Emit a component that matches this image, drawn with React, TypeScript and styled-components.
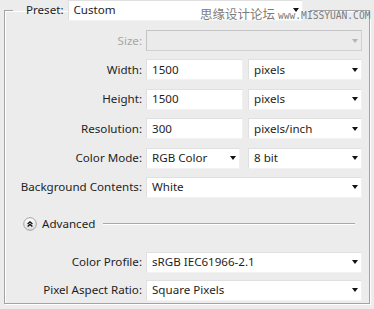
import React from "react";
import styled, { createGlobalStyle } from "styled-components";

const Global = createGlobalStyle`
  html, body { margin: 0; padding: 0; background: #ececec; }
  body { font-family: "Noto Sans", "Liberation Sans", Arial, sans-serif; font-size: 11.6px; color: #1e1e1e; }
`;

const Page = styled.div`
  position: relative;
  width: 374px;
  height: 309px;
  overflow: hidden;
  background: #ececec;
`;

const Group = styled.fieldset`
  margin: -1px 0 0 4px;
  width: 366px;
  box-sizing: border-box;
  height: 305px;
  padding: 9px 7px 0 8px;
  border: 1px solid #a3a3a3;
  box-shadow: 1px 1px 0 #ffffff, inset 1px 1px 0 #ffffff;
  min-width: 0;
`;

const Legend = styled.legend`
  display: flex;
  align-items: center;
  gap: 4px;
  padding: 0 7px 0 13px;
  height: 22px;
`;

const Label = styled.span<{ $disabled?: boolean }>`
  color: ${(p) => (p.$disabled ? "#a6a6a6" : "#1e1e1e")};
  white-space: nowrap;
  text-align: right;
  line-height: 14px;
`;

const Rows = styled.div<{ $gap?: number }>`
  display: grid;
  grid-template-columns: 129px 216px;
  column-gap: 4px;
  row-gap: ${(p) => p.$gap ?? 8.4}px;
  align-items: center;
`;

const Pair = styled.div<{ $first: number; $gap: number }>`
  display: grid;
  grid-template-columns: ${(p) => p.$first}px 1fr;
  column-gap: ${(p) => p.$gap}px;
`;

const Box = styled.div<{ $disabled?: boolean; $w?: number }>`
  position: relative;
  box-sizing: border-box;
  height: 21px;
  ${(p) => (p.$w ? `width: ${p.$w}px;` : "")}
  display: flex;
  align-items: center;
  padding: 0 16px 0 5px;
  line-height: 14px;
  background: ${(p) => (p.$disabled ? "#ebebeb" : "#ffffff")};
  border: 1px solid ${(p) => (p.$disabled ? "#c4c4c4" : "#e0e0e0")};
  border-right-color: ${(p) => (p.$disabled ? "#d0d0d0" : "#f0f0f0")};
  border-bottom-color: ${(p) => (p.$disabled ? "#d0d0d0" : "#f2f2f2")};
  white-space: nowrap;
  color: #1e1e1e;
`;

const Arrow = styled.span<{ $disabled?: boolean }>`
  position: absolute;
  right: 3px;
  top: 50%;
  margin-top: -2px;
  width: 0;
  height: 0;
  border-left: 3.5px solid transparent;
  border-right: 3.5px solid transparent;
  border-top: 4px solid ${(p) => (p.$disabled ? "#b4b4b4" : "#111")};
`;

const AdvancedRow = styled.div`
  display: flex;
  align-items: center;
  gap: 5px;
  margin: 18px 7px 0 10px;
  height: 16px;
`;

const Line = styled.div`
  flex: 1;
  height: 1px;
  background: #a8a8a8;
  box-shadow: 0 1px 0 #ffffff;
  margin-left: 3px;
`;

const Bottom = styled(Rows)`
  margin-top: 20px;
`;

const Watermark = styled.div`
  position: absolute;
  top: 6px;
  left: 200px;
  display: flex;
  align-items: center;
  gap: 3px;
  color: #7c7c7c;
  pointer-events: none;
`;

const WmCn = styled.span`
  font-family: "Noto Sans CJK SC", sans-serif;
  font-size: 12.5px;
  line-height: 16px;
`;

const WmEn = styled.span`
  font-family: "DejaVu Sans Mono", monospace;
  font-size: 9.6px;
  margin-top: 2px;
`;

const Select = ({ children, disabled, w }: { children?: React.ReactNode; disabled?: boolean; w?: number }) => (
  <Box $disabled={disabled} $w={w}>
    {children}
    <Arrow $disabled={disabled} />
  </Box>
);

const AdvIcon = () => (
  <svg width="14" height="14" viewBox="0 0 14 14">
    <defs>
      <linearGradient id="g" x1="0" y1="0" x2="0" y2="1">
        <stop offset="0" stopColor="#ffffff" />
        <stop offset="1" stopColor="#dcdcdc" />
      </linearGradient>
    </defs>
    <circle cx="7" cy="7" r="6.3" fill="url(#g)" stroke="#9a9a9a" strokeWidth="0.9" />
    <path d="M4.6 7 L7 4.8 L9.4 7 M4.6 9.6 L7 7.4 L9.4 9.6" fill="none" stroke="#111" strokeWidth="1.3" />
  </svg>
);

export default function App() {
  return (
    <Page>
      <Global />
      <Group>
        <Legend>
          <Label>Preset:</Label>
          <Select w={235}>Custom</Select>
        </Legend>
        <Rows>
          <Label $disabled>Size:</Label>
          <Select disabled />
          <Label>Width:</Label>
          <Pair $first={97} $gap={5}>
            <Box>1500</Box>
            <Select>pixels</Select>
          </Pair>
          <Label>Height:</Label>
          <Pair $first={97} $gap={5}>
            <Box>1500</Box>
            <Select>pixels</Select>
          </Pair>
          <Label>Resolution:</Label>
          <Pair $first={97} $gap={5}>
            <Box>300</Box>
            <Select>pixels/inch</Select>
          </Pair>
          <Label>Color Mode:</Label>
          <Pair $first={94} $gap={8}>
            <Select>RGB Color</Select>
            <Select>8 bit</Select>
          </Pair>
          <Label>Background Contents:</Label>
          <Select>White</Select>
        </Rows>
        <AdvancedRow>
          <AdvIcon />
          <span>Advanced</span>
          <Line />
        </AdvancedRow>
        <Bottom $gap={7}>
          <Label>Color Profile:</Label>
          <Select>sRGB IEC61966-2.1</Select>
          <Label>Pixel Aspect Ratio:</Label>
          <Select>Square Pixels</Select>
        </Bottom>
      </Group>
      <Watermark>
        <WmCn>思缘设计论坛</WmCn>
        <WmEn>www.MISSYUAN.COM</WmEn>
      </Watermark>
    </Page>
  );
}
